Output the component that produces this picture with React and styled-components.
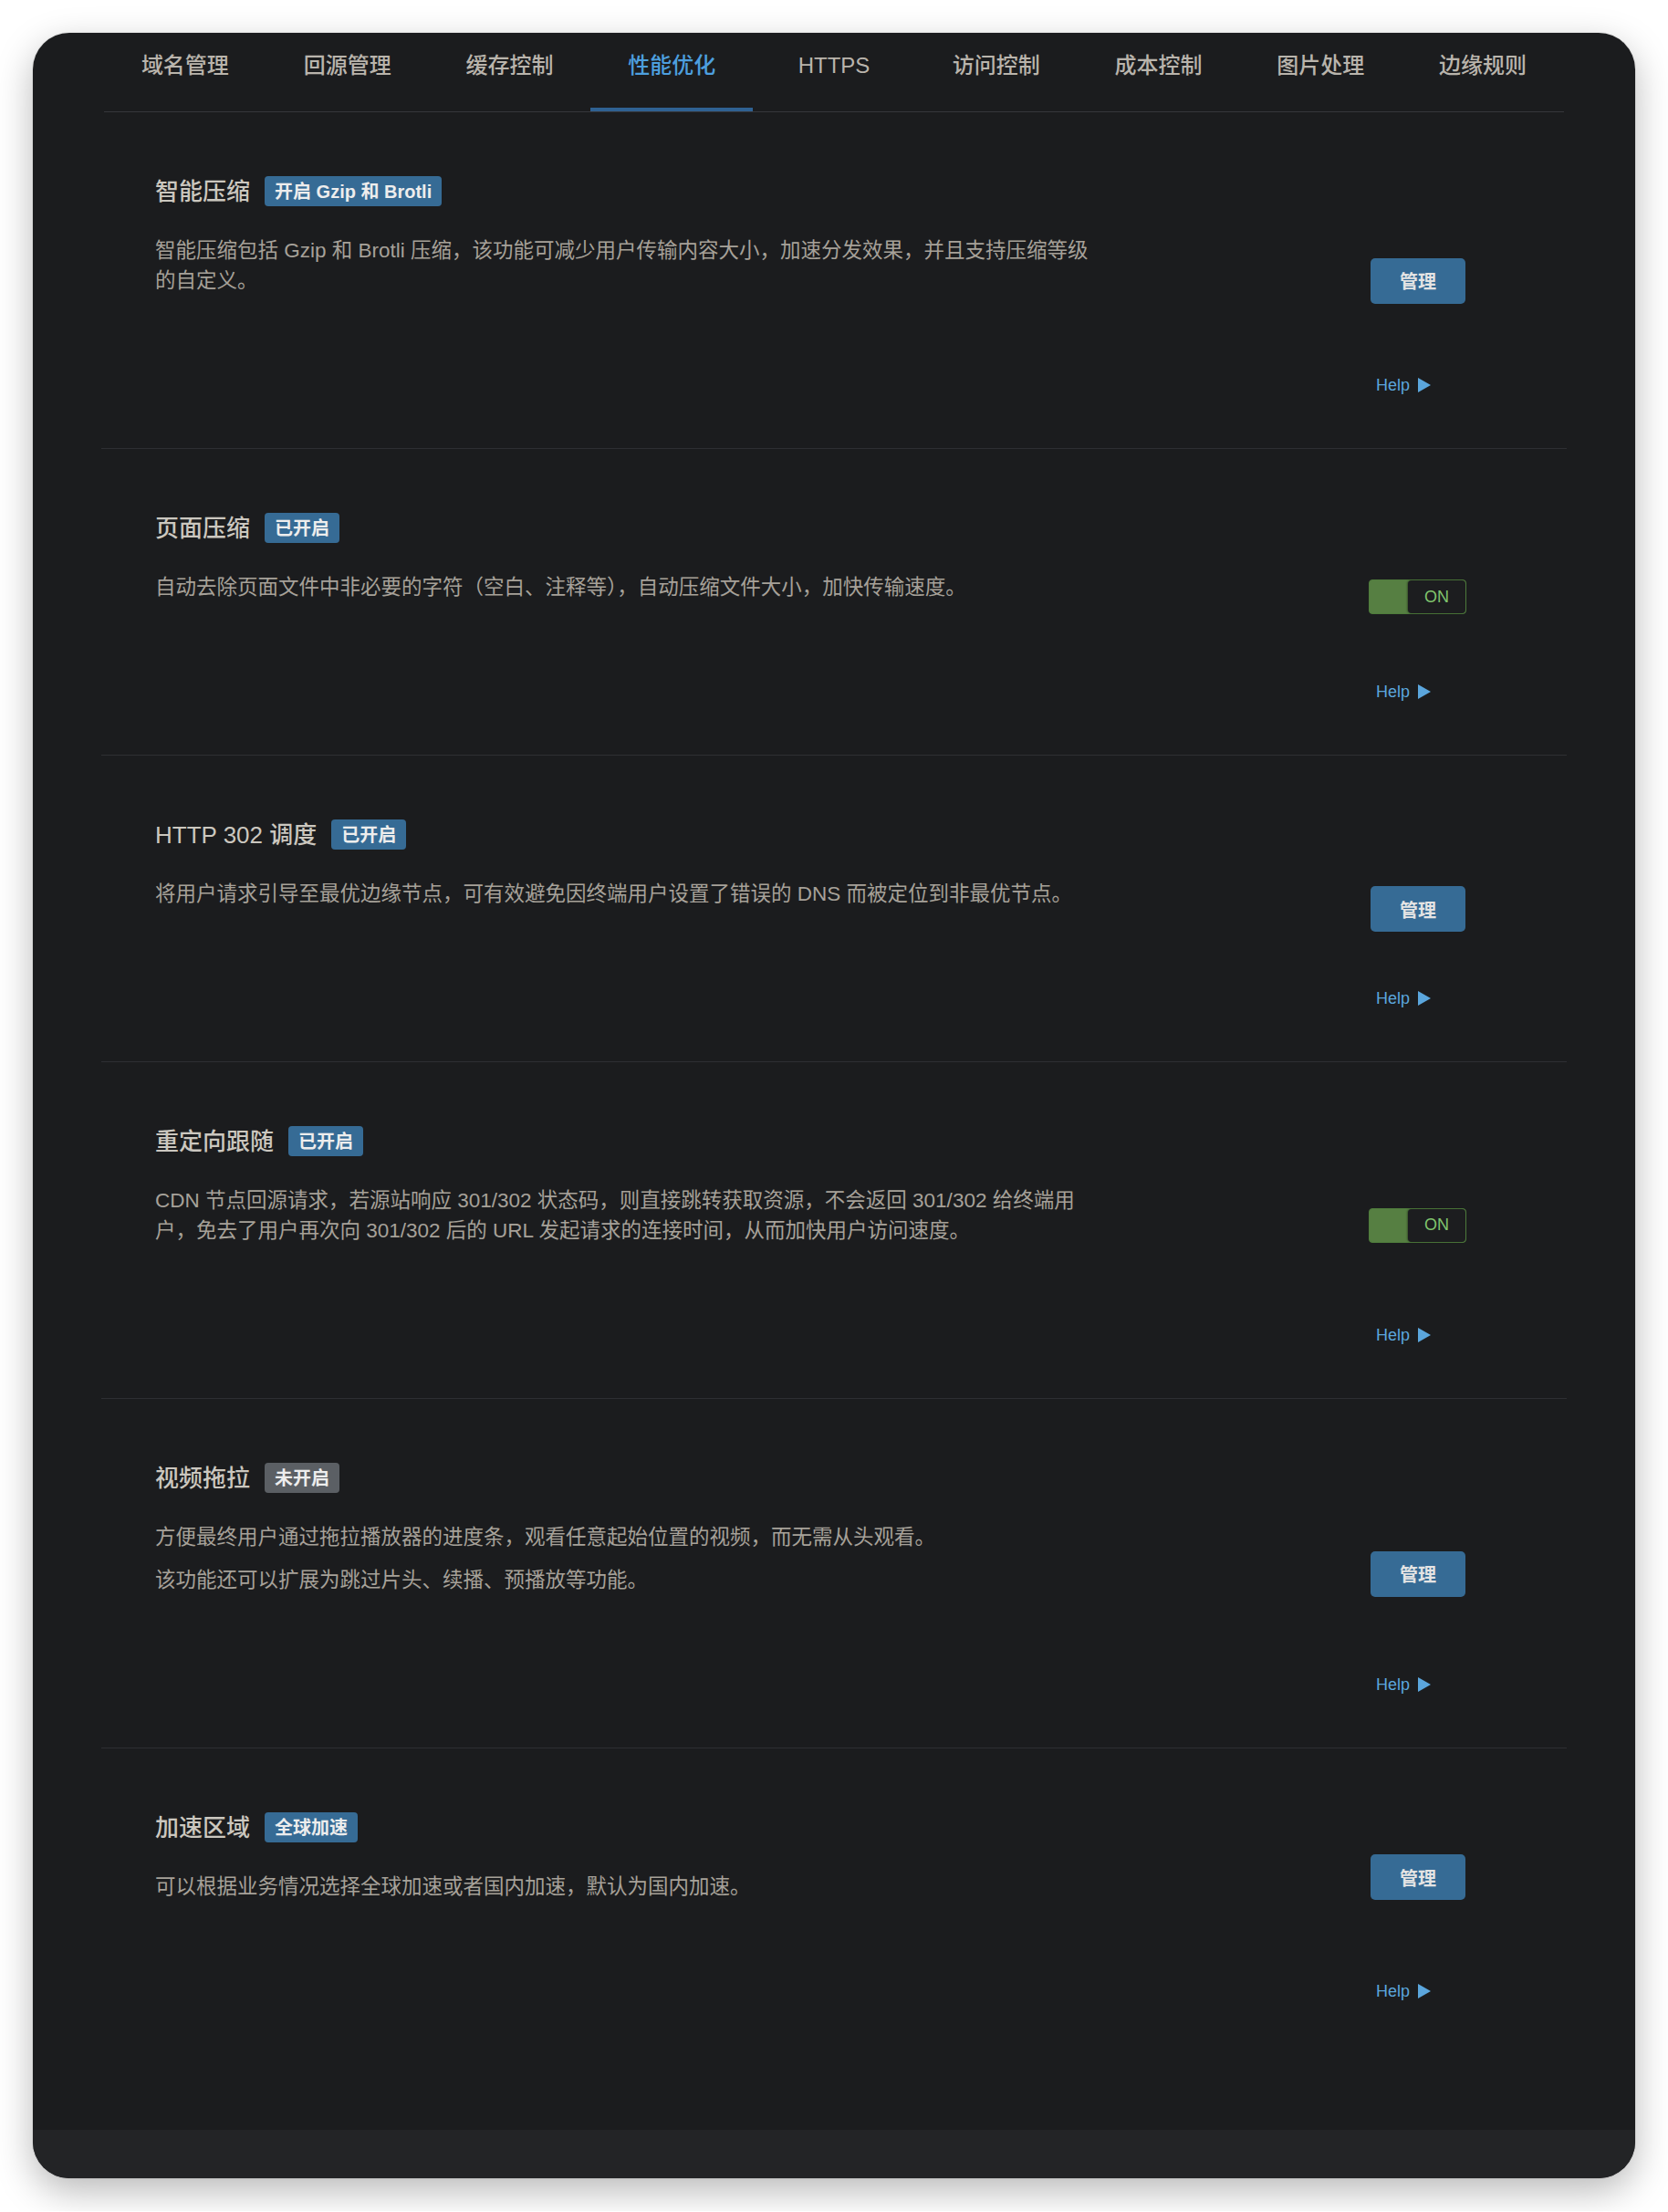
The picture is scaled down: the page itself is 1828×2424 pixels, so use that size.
import React from 'react'
import styled, { createGlobalStyle } from 'styled-components'

const GlobalStyle = createGlobalStyle`
  html, body {
    margin: 0;
    padding: 0;
    background: #ffffff;
  }
  body {
    font-family: "Liberation Sans", "Noto Sans CJK SC", sans-serif;
  }
`

const Page = styled.div`
  padding: 36px;
`

const Window = styled.div`
  background: #1b1c1e;
  border-radius: 40px;
  overflow: hidden;
  box-shadow: 0 14px 40px rgba(0, 0, 0, 0.28), 0 0 0 1px rgba(0, 0, 0, 0.06);
  display: flex;
  flex-direction: column;
`

const TabBar = styled.nav`
  display: grid;
  grid-template-columns: repeat(9, 1fr);
  margin: 0 78px;
  border-bottom: 1px solid #36373b;
`

const Tab = styled.div`
  box-sizing: border-box;
  height: 86px;
  padding-bottom: 10px;
  display: flex;
  align-items: center;
  justify-content: center;
  font-size: 24px;
  line-height: 1;
  font-weight: 500;
  color: ${p => (p.$active ? '#4d9fdf' : '#b9b4ac')};
  border-bottom: 4px solid ${p => (p.$active ? '#2f6192' : 'transparent')};
`

const Sections = styled.div`
  margin: 0 75px;
  padding-bottom: 83px;
`

const Section = styled.section`
  display: grid;
  grid-template-columns: 1fr 107px;
  grid-template-rows: auto auto;
  padding: 70px 110px 57px 59px;
  border-bottom: 1px solid #2e2f33;
  &:last-child {
    border-bottom: none;
  }
`

const Main = styled.div`
  grid-column: 1;
  grid-row: 1;
`

const TitleRow = styled.div`
  display: flex;
  align-items: center;
  gap: 16px;
  height: 33px;
`

const Title = styled.h3`
  margin: 0;
  font-size: 26px;
  line-height: 1;
  font-weight: 500;
  color: #cbc7bf;
  white-space: nowrap;
`

const Badge = styled.span`
  display: inline-flex;
  align-items: center;
  height: 33px;
  padding: 0 11px;
  border-radius: 4px;
  background: ${p => (p.$off ? '#5b5f64' : '#366b95')};
  color: #ededed;
  font-size: 20px;
  line-height: 1;
  font-weight: 700;
  white-space: nowrap;
`

const Desc = styled.div`
  margin-top: 32px;
  max-width: 1025px;
  p {
    margin: 0;
    font-size: 22.5px;
    line-height: 33px;
    color: #a6a199;
  }
  p + p {
    margin-top: 14px;
  }
`

const Control = styled.div`
  grid-column: 2;
  grid-row: 1 / 3;
  align-self: center;
  height: 50px;
  margin-bottom: ${p => p.$lift}px;
  display: flex;
  align-items: flex-start;
`

const Button = styled.button`
  width: 104px;
  height: 50px;
  margin-left: 2px;
  border: none;
  border-radius: 5px;
  background: #366b95;
  color: #e4e4e4;
  font-family: inherit;
  font-size: 20px;
  font-weight: 700;
  cursor: pointer;
`

const Toggle = styled.div`
  box-sizing: border-box;
  width: 107px;
  height: 38px;
  display: flex;
  border: 1.5px solid #4f7c3c;
  border-radius: 4px;
  background: #567f42;
`

const Knob = styled.span`
  margin-left: 42px;
  flex: 1;
  display: flex;
  align-items: center;
  justify-content: center;
  border-radius: 4px;
  background: #1c1d1f;
  box-shadow: -1px 0 2px rgba(0, 0, 0, 0.35);
  color: #80c46d;
  font-size: 18px;
`

const Help = styled.a`
  grid-column: 2;
  grid-row: 2;
  margin-top: 86px;
  height: 24px;
  padding-left: 8px;
  display: flex;
  align-items: center;
  gap: 9px;
  font-size: 18px;
  color: #5ba6dd;
  text-decoration: none;
`

const Footer = styled.div`
  height: 53px;
  background: #232426;
`

const tabs = ['域名管理', '回源管理', '缓存控制', '性能优化', 'HTTPS', '访问控制', '成本控制', '图片处理', '边缘规则']

const items = [
  {
    title: '智能压缩',
    badge: '开启 Gzip 和 Brotli',
    desc: ['智能压缩包括 Gzip 和 Brotli 压缩，该功能可减少用户传输内容大小，加速分发效果，并且支持压缩等级的自定义。'],
    control: 'button',
  },
  {
    title: '页面压缩',
    badge: '已开启',
    desc: ['自动去除页面文件中非必要的字符（空白、注释等），自动压缩文件大小，加快传输速度。'],
    control: 'toggle',
  },
  {
    title: 'HTTP 302 调度',
    badge: '已开启',
    desc: ['将用户请求引导至最优边缘节点，可有效避免因终端用户设置了错误的 DNS 而被定位到非最优节点。'],
    control: 'button',
  },
  {
    title: '重定向跟随',
    badge: '已开启',
    desc: ['CDN 节点回源请求，若源站响应 301/302 状态码，则直接跳转获取资源，不会返回 301/302 给终端用户，免去了用户再次向 301/302 后的 URL 发起请求的连接时间，从而加快用户访问速度。'],
    control: 'toggle',
  },
  {
    title: '视频拖拉',
    badge: '未开启',
    off: true,
    desc: ['方便最终用户通过拖拉播放器的进度条，观看任意起始位置的视频，而无需从头观看。', '该功能还可以扩展为跳过片头、续播、预播放等功能。'],
    control: 'button',
  },
  {
    title: '加速区域',
    badge: '全球加速',
    desc: ['可以根据业务情况选择全球加速或者国内加速，默认为国内加速。'],
    control: 'button',
    lift: 66,
  },
]

function Arrow() {
  return (
    <svg width="14" height="16" viewBox="0 0 14 16">
      <polygon points="0,0 14,8 0,16" fill="currentColor" />
    </svg>
  )
}

export default function App() {
  return (
    <>
      <GlobalStyle />
      <Page>
        <Window>
          <TabBar>
            {tabs.map(t => (
              <Tab key={t} $active={t === '性能优化'}>{t}</Tab>
            ))}
          </TabBar>
          <Sections>
            {items.map(it => (
              <Section key={it.title}>
                <Main>
                  <TitleRow>
                    <Title>{it.title}</Title>
                    <Badge $off={it.off}>{it.badge}</Badge>
                  </TitleRow>
                  <Desc>
                    {it.desc.map(d => (
                      <p key={d}>{d}</p>
                    ))}
                  </Desc>
                </Main>
                <Control $lift={it.lift || 12}>
                  {it.control === 'button' ? (
                    <Button>管理</Button>
                  ) : (
                    <Toggle>
                      <Knob>ON</Knob>
                    </Toggle>
                  )}
                </Control>
                <Help href="#">
                  Help <Arrow />
                </Help>
              </Section>
            ))}
          </Sections>
          <Footer />
        </Window>
      </Page>
    </>
  )
}
